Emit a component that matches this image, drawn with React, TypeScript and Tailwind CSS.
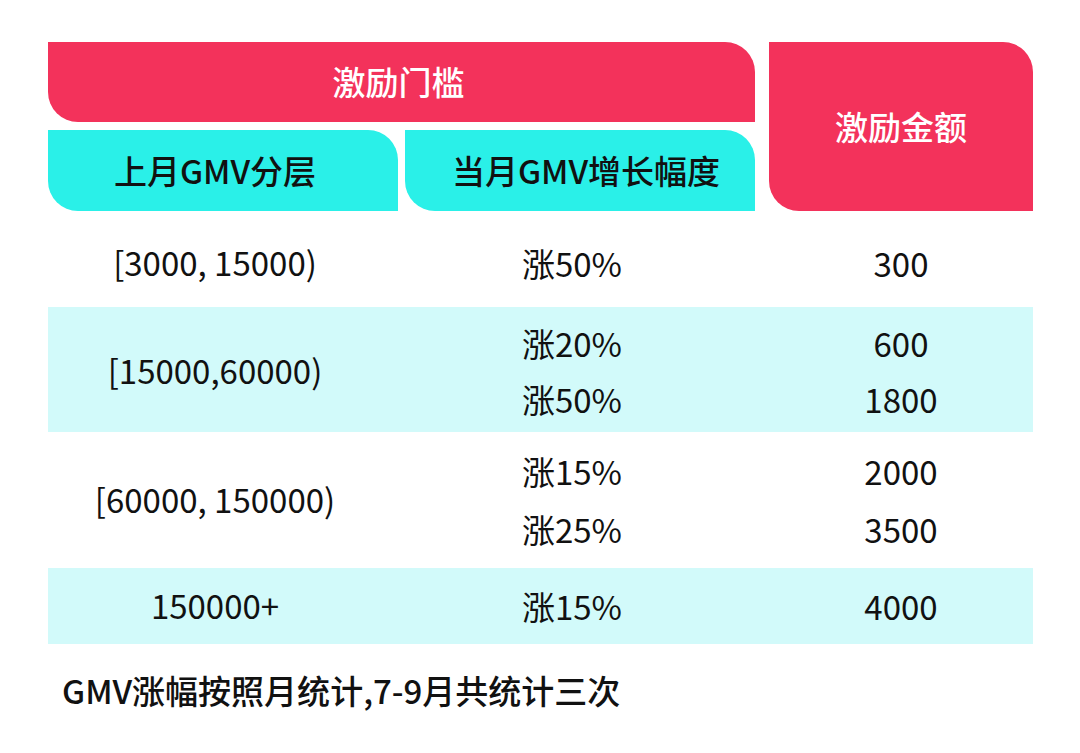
import React from "react";

type Row = {
  tier: string;
  lines: { growth: string; amount: string }[];
  height: string;
  lineH: string;
  pad: string;
  shaded: boolean;
};

const rows: Row[] = [
  { tier: "[3000, 15000)", lines: [{ growth: "涨50%", amount: "300" }], height: "h-[96px]", lineH: "leading-[56px]", pad: "pt-[8px]", shaded: false },
  {
    tier: "[15000,60000)",
    lines: [
      { growth: "涨20%", amount: "600" },
      { growth: "涨50%", amount: "1800" },
    ],
    height: "h-[125px]",
    lineH: "leading-[56px]",
    pad: "pt-[2px]",
    shaded: true,
  },
  {
    tier: "[60000, 150000)",
    lines: [
      { growth: "涨15%", amount: "2000" },
      { growth: "涨25%", amount: "3500" },
    ],
    height: "h-[136px]",
    lineH: "leading-[58px]",
    pad: "pt-0",
    shaded: false,
  },
  { tier: "150000+", lines: [{ growth: "涨15%", amount: "4000" }], height: "h-[76px]", lineH: "leading-[56px]", pad: "pt-0", shaded: true },
];

export default function App() {
  return (
    <div
      className="w-[1080px] h-[753px] bg-white pt-[42px] pl-[48px] text-[#111111]"
      style={{ fontFamily: '"Noto Sans CJK SC", "Noto Sans", sans-serif' }}
    >
      {/* header */}
      <div className="flex w-[985px]">
        <div className="w-[707px]">
          <div className="flex h-[80px] items-center justify-center rounded-tr-[30px] rounded-bl-[30px] bg-[#f3325b] pr-[6px] text-[33px] font-medium text-white">
            激励门槛
          </div>
          <div className="mt-[8px] flex gap-[7px]">
            <div className="flex h-[81px] w-[350px] items-center justify-center rounded-tr-[30px] rounded-bl-[30px] bg-[#2af0e8] pr-[16px] text-[33px] font-medium">
              上月GMV分层
            </div>
            <div className="flex h-[81px] w-[350px] items-center justify-center rounded-tr-[30px] rounded-bl-[30px] bg-[#2af0e8] pl-[12px] text-[33px] font-medium">
              当月GMV增长幅度
            </div>
          </div>
        </div>
        <div className="ml-[14px] flex h-[169px] w-[264px] items-center justify-center rounded-tr-[30px] rounded-bl-[30px] bg-[#f3325b] text-[33px] font-medium text-white">
          激励金额
        </div>
      </div>

      {/* body */}
      <div className="w-[985px]">
        {rows.map((r, i) => (
          <div key={i} className={`flex items-center ${r.height} ${r.shaded ? "bg-[#d2fafa]" : "bg-white"}`}>
            <div className={`w-[350px] pr-[16px] text-center text-[33px] ${r.pad}`}>{r.tier}</div>
            <div className={`ml-[7px] w-[350px] pr-[16px] text-center text-[33px] ${r.pad}`}>
              {r.lines.map((l, j) => (
                <div key={j} className={r.lineH}>{l.growth}</div>
              ))}
            </div>
            <div className={`ml-[14px] w-[264px] text-center text-[33px] ${r.pad}`}>
              {r.lines.map((l, j) => (
                <div key={j} className={r.lineH}>{l.amount}</div>
              ))}
            </div>
          </div>
        ))}
      </div>

      <div className="mt-[26px] pl-[14px] text-[33px] font-medium leading-[40px]">
        GMV涨幅按照月统计,7-9月共统计三次
      </div>
    </div>
  );
}
